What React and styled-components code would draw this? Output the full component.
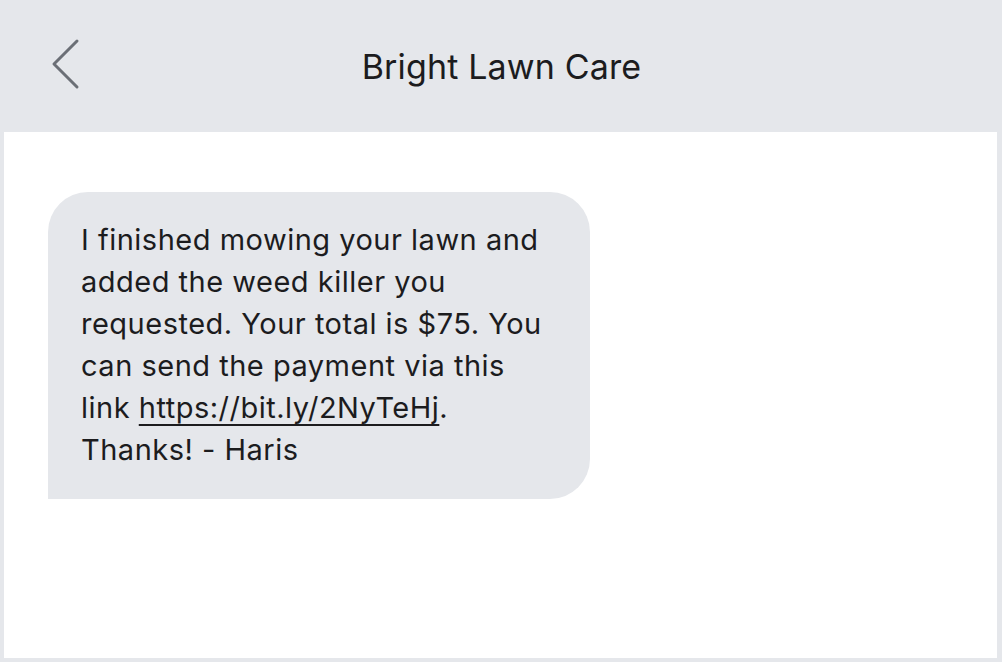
import React from 'react';
import styled, { createGlobalStyle } from 'styled-components';

const Global = createGlobalStyle`
  html, body {
    margin: 0;
    padding: 0;
    background: #e5e7eb;
  }
  body {
    font-family: Inter, "Noto Sans", "Liberation Sans", sans-serif;
    color: #1c1c1e;
  }
`;

const Screen = styled.div`
  display: flex;
  flex-direction: column;
  width: 1002px;
  height: 662px;
  background: #e5e7eb;
  padding: 0 5px 4px 4px;
  box-sizing: border-box;
`;

const Header = styled.header`
  position: relative;
  display: flex;
  align-items: center;
  justify-content: center;
  height: 132px;
  flex-shrink: 0;
`;

const Back = styled.button`
  position: absolute;
  left: 40px;
  top: 38px;
  width: 36px;
  height: 52px;
  padding: 0;
  border: 0;
  background: none;
  cursor: pointer;
`;

const Title = styled.h1`
  margin: 0 0 0 2px;
  font-size: 34px;
  font-weight: 400;
  letter-spacing: 0.15px;
  color: #1c1c1e;
`;

const Thread = styled.main`
  flex: 1;
  display: flex;
  flex-direction: column;
  align-items: flex-start;
  background: #fff;
  padding: 60px 44px;
`;

const Bubble = styled.div`
  width: 542px;
  box-sizing: border-box;
  padding: 27px 30px 28px 33px;
  background: #e5e7eb;
  border-radius: 40px 40px 40px 0;
  font-size: 29px;
  line-height: 42px;
  letter-spacing: 0.5px;
  color: #1c1c1e;
`;

const Link = styled.a`
  color: inherit;
  text-decoration: underline;
  text-decoration-thickness: 1.5px;
  text-underline-offset: 6px;
`;

export default function App() {
  return (
    <>
      <Global />
      <Screen>
        <Header>
          <Back aria-label="Back">
            <svg width="36" height="52" viewBox="0 0 36 52" fill="none">
              <path d="M33 3 L10 26 L33 49" stroke="#6b6f76" strokeWidth="3" strokeLinecap="round" strokeLinejoin="round" />
            </svg>
          </Back>
          <Title>Bright Lawn Care</Title>
        </Header>
        <Thread>
          <Bubble>
            I finished mowing your lawn and added the weed killer you requested. Your total is $75. You can send the payment via this link <Link href="#">https://bit.ly/2NyTeHj</Link>. Thanks! - Haris
          </Bubble>
        </Thread>
      </Screen>
    </>
  );
}
